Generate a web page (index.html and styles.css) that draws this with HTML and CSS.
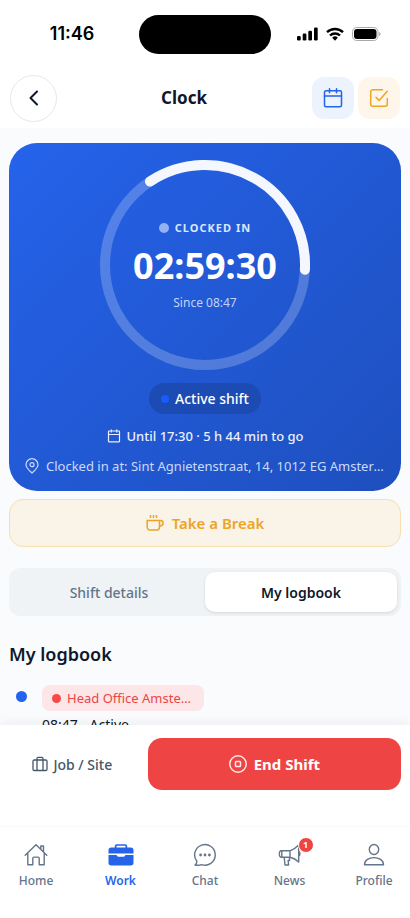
FILE: index.html
```html
<!DOCTYPE html>
<html lang="en">
<head>
<meta charset="utf-8">
<meta name="viewport" content="width=device-width, initial-scale=1">
<title>Clock</title>
<link rel="stylesheet" href="styles.css">
</head>
<body>
<div class="status-bar">
  <time class="status-time">11:46</time>
  <div class="island"></div>
  <div class="status-icons">
    <svg width="21" height="14" viewBox="0 0 21 14"><g fill="#000"><rect x="0" y="9" width="3.700" height="4.500" rx="1.200"/><rect x="5.700" y="6.500" width="3.700" height="7" rx="1.200"/><rect x="11.300" y="3.700" width="3.700" height="9.800" rx="1.200"/><rect x="17" y=".5" width="3.700" height="13" rx="1.200"/></g></svg>
    <svg width="18" height="14" viewBox="0 0 18 14" stroke="#000" stroke-width="2.400"><path d="M1 5.200a11.500 11.500 0 0 1 16 0"/><path d="M4 8.500a7.200 7.200 0 0 1 10 0"/><path d="M6.200 10.700a4 4 0 0 1 5.600 0L9 13.700z" fill="#000" stroke="none"/></svg>
    <svg width="29" height="14" viewBox="0 0 29 14"><rect x=".5" y=".5" width="25.500" height="13" rx="4.200" fill="none" stroke="#aaa"/><rect x="2" y="2" width="22.500" height="10" rx="3" fill="#000"/><path d="M27.300 4.800v4.400c1.600-.7 1.600-3.700 0-4.400z" fill="#999"/></svg>
  </div>
</div>

<header class="header">
  <button class="back" aria-label="Back"><svg width="24" height="24" viewBox="0 0 24 24"><path d="M15 5.500 8.500 12l6.500 6.500"/></svg></button>
  <h1 class="title">Clock</h1>
  <div class="header-actions">
    <button class="square square-blue" aria-label="Calendar"><svg width="20" height="20" viewBox="0 0 20 20"><rect x="1.500" y="2.800" width="17" height="16" rx="1.500"/><path d="M1.500 8h17M6.500.8v4M13.500.8v4"/></svg></button>
    <button class="square square-amber" aria-label="Tasks"><svg width="20" height="20" viewBox="0 0 20 20"><path d="M18.300 10.500v5.800a2 2 0 0 1-2 2H3.700a2 2 0 0 1-2-2V3.700a2 2 0 0 1 2-2h9.800"/><path d="m7 9.200 3.200 3.200 8-9.200"/></svg></button>
  </div>
</header>

<main class="content">
  <section class="card">
    <div class="ring">
      <svg class="ring-art" viewBox="0 0 210 210"><circle class="ring-track" cx="105" cy="105" r="100"/><path class="ring-value" d="M50 21.500A100 100 0 0 1 204.900 109.700"/></svg>
      <div class="ring-text">
        <div class="state"><span class="state-dot"></span>CLOCKED IN</div>
        <div class="timer">02:59:30</div>
        <div class="since">Since 08:47</div>
      </div>
    </div>
    <div class="pill"><span class="pill-dot"></span>Active shift</div>
    <div class="until"><svg width="14" height="14" viewBox="0 0 14 14"><rect x="1.500" y="2" width="11" height="10.800" rx=".5"/><path d="M1.500 5.500h11M4.300.5v3M9.700.5v3"/></svg>Until 17:30 · 5 h 44 min to go</div>
    <div class="place"><svg width="14" height="16" viewBox="0 0 14 16"><path d="M7 15C4.500 12.700 1 9.700 1 6.700a6 6 0 0 1 12 0C13 9.700 9.500 12.700 7 15z"/><circle cx="7" cy="6.700" r="2"/></svg><span class="place-text">Clocked in at: Sint Agnietenstraat, 14, 1012 EG Amsterdam</span></div>
  </section>

  <button class="break"><svg width="18" height="18" viewBox="0 0 18 18"><path d="M1.200 6.500h12.300v6.800a2.700 2.700 0 0 1-2.700 2.700H3.900a2.700 2.700 0 0 1-2.700-2.700zM13.500 6.500h1a2.600 2.600 0 0 1 0 5.200h-1M4.500 1v3M7.500 1v3M10.500 1v3"/></svg>Take a Break</button>

  <div class="tabs" role="tablist">
    <button class="tab" role="tab" aria-selected="false">Shift details</button>
    <button class="tab tab-active" role="tab" aria-selected="true">My logbook</button>
  </div>

  <h2 class="section-title">My logbook</h2>
  <div class="entry">
    <span class="entry-dot"></span>
    <div class="entry-body">
      <div class="tag"><span class="tag-dot"></span><span class="tag-text">Head Office Amsterdam</span></div>
      <div class="entry-time">08:47 - Active</div>
    </div>
  </div>
</main>

<div class="action-bar">
  <button class="job"><svg width="16" height="16" viewBox="0 0 16 16"><rect x="1" y="4" width="14" height="10.500" rx="1.300"/><path d="M5 14.500V2.500A1.200 1.200 0 0 1 6.200 1.300h3.600A1.200 1.200 0 0 1 11 2.500v12"/></svg>Job / Site</button>
  <button class="end"><svg width="18" height="18" viewBox="0 0 18 18"><circle cx="9" cy="9" r="8.200"/><rect x="6.500" y="6.500" width="5" height="5" rx=".8"/></svg>End Shift</button>
</div>

<nav class="nav">
  <a class="nav-item" href="#"><svg width="24" height="24" viewBox="0 0 24 24"><path d="M1.200 12.200 12 1.800l10.800 10.400M3.800 10v11.800h5v-6.500a1.200 1.200 0 0 1 1.200-1.200h4a1.200 1.200 0 0 1 1.200 1.200v6.500h5V10M16.800 6V3h2.700v5.700"/></svg>Home</a>
  <a class="nav-item nav-active" href="#"><svg class="solid" width="26" height="24" viewBox="0 0 26 24"><path d="M6.800 4.500V3.300A2 2 0 0 1 8.800 1.300h8.400a2 2 0 0 1 2 2V4.500h3.600A2.700 2.700 0 0 1 25.500 7.200V10.500H.5V7.200A2.700 2.700 0 0 1 3.200 4.500zM8.500 3.200V4.500h9V3.200a.4.400 0 0 0-.4-.4H8.900a.4.400 0 0 0-.4.400zM.5 11.900H8.200c.9 0 1 1.900 2.200 1.900h5.200c1.200 0 1.300-1.900 2.200-1.900h7.700v7.900a2.700 2.700 0 0 1-2.700 2.700H3.200a2.700 2.700 0 0 1-2.700-2.700z" fill-rule="evenodd"/></svg>Work</a>
  <a class="nav-item" href="#"><svg width="24" height="24" viewBox="0 0 24 24"><path d="M3.800 18.200A10.300 10.300 0 1 1 8.500 21.600C6.800 22.400 4.500 22.300 2 22c1.400-1 2-2.300 1.800-3.800z"/><circle class="dot" cx="7.600" cy="12" r="1.400"/><circle class="dot" cx="12" cy="12" r="1.400"/><circle class="dot" cx="16.400" cy="12" r="1.400"/></svg>Chat</a>
  <a class="nav-item" href="#"><span class="badge-wrap"><svg width="24" height="24" viewBox="0 0 24 24"><path d="M3 7.800h9v6.400H3c-2.200 0-2.200-6.400 0-6.400zM3.800 7.800v6.400M12 7.800c3.500-1.300 6.300-3.300 8.700-5.800v17c-2.400-2.400-5.200-4-8.700-4.800M6.200 14.200l.8 7.800h3.600l-.5-4.500h1.400v-3.300M20.700 8.500c1.600.7 1.600 4 0 4.700"/></svg><span class="badge">1</span></span>News</a>
  <a class="nav-item" href="#"><svg width="24" height="24" viewBox="0 0 24 24"><ellipse cx="12" cy="6.500" rx="4.700" ry="5"/><path d="M2.500 21.700c0-9.500 19-9.500 19 0z"/></svg>Profile</a>
</nav>
</body>
</html>
```
FILE: styles.css
```css
* { box-sizing: border-box; }
body {
  margin: 0;
  height: 100vh;
  display: flex;
  flex-direction: column;
  background: #fff;
  color: #0f172a;
  font-family: "Noto Sans", sans-serif;
  font-size: 14px;
}
button { font: inherit; border: 0; padding: 0; background: none; color: inherit; }
svg { display: block; flex: none; fill: none; }

.status-bar {
  flex: none;
  display: grid;
  grid-template-columns: 1fr 132px 1fr;
  align-items: center;
  height: 68px;
}
.status-time { font: 600 18px/20px Inter, sans-serif; color: #000; text-align: center; padding-left: 5px; }
.island { height: 39px; border-radius: 20px; background: #000; }
.status-icons { display: flex; gap: 8px; padding-left: 26px; }

.header {
  flex: none;
  display: grid;
  grid-template-columns: 1fr auto 1fr;
  align-items: center;
  height: 60px;
  padding: 0 10px;
}
.back {
  display: grid;
  place-items: center;
  width: 47px;
  height: 47px;
  border: 1px solid #e2e8f0;
  border-radius: 50%;
}
.back svg { stroke: #0f172a; stroke-width: 2; stroke-linecap: round; stroke-linejoin: round; }
.title { margin: 0; padding-right: 42px; font-size: 17px; line-height: 24px; font-weight: 700; }
.header-actions { display: flex; justify-content: flex-end; gap: 4px; }
.square { display: grid; place-items: center; width: 42px; height: 42px; border-radius: 12px; }
.square svg { stroke: currentColor; stroke-width: 1.5; stroke-linecap: round; stroke-linejoin: round; }
.square-blue { background: #edf3fd; color: #2563eb; }
.square-amber { background: #fef6ea; color: #f0a41f; }

.content {
  flex: 1;
  min-height: 0;
  overflow: hidden;
  padding: 15px 9px 0;
  background: #f9fbfd;
}
.card {
  display: flex;
  flex-direction: column;
  align-items: center;
  padding: 17px 16px 15px;
  border-radius: 28px;
  background: linear-gradient(135deg, #2563eb, #1e4fbe);
  color: #fff;
}
.ring { display: grid; width: 210px; height: 210px; }
.ring > * { grid-area: 1 / 1; }
.ring-track { stroke: rgba(255, 255, 255, .22); stroke-width: 10; }
.ring-value { stroke: #f4f8fe; stroke-width: 10; stroke-linecap: round; }
.ring-text { display: flex; flex-direction: column; align-items: center; padding-top: 59px; }
.state {
  display: flex;
  align-items: center;
  gap: 6px;
  font-size: 11px;
  line-height: 18px;
  font-weight: 700;
  letter-spacing: 1px;
  color: #dbe7fd;
}
.state-dot { width: 10px; height: 10px; border-radius: 50%; background: #93b1f4; }
.timer { font-size: 36px; line-height: 44px; font-weight: 700; margin-top: 7px; }
.since { font-size: 12px; line-height: 18px; margin-top: 6px; color: #c3d3f8; }
.pill {
  display: flex;
  align-items: center;
  gap: 6px;
  height: 31px;
  margin-top: 13px;
  padding: 0 12px;
  border-radius: 16px;
  background: #1c4bb3;
  font-weight: 500;
}
.pill-dot { width: 8px; height: 8px; border-radius: 50%; background: #155dfc; }
.until, .place { display: flex; align-items: center; max-width: 100%; line-height: 20px; font-size: 13px; }
.until { gap: 6px; margin-top: 12px; font-weight: 500; color: #e9f0fe; }
.place { gap: 7px; margin-top: 10px; color: #cbdafa; }
.until svg, .place svg { stroke: currentColor; stroke-width: 1.2; }
.place-text { overflow: hidden; white-space: nowrap; text-overflow: ellipsis; }

.break {
  display: flex;
  align-items: center;
  justify-content: center;
  gap: 8px;
  width: 100%;
  height: 48px;
  margin-top: 8px;
  border: 1px solid #f8dfb2;
  border-radius: 14px;
  background: #f9f3e8;
  color: #eda426;
  font-size: 15px;
  font-weight: 600;
}
.break svg { stroke: currentColor; stroke-width: 1.5; }

.tabs {
  display: grid;
  grid-template-columns: 1fr 1fr;
  height: 48px;
  margin-top: 21px;
  padding: 4px;
  border-radius: 12px;
  background: #eff3f5;
}
.tab { border-radius: 10px; color: #64748b; font-weight: 500; }
.tab-active { background: #fff; color: #0f172a; font-weight: 600; box-shadow: 0 1px 3px rgba(15, 23, 42, .12); }

.section-title { margin: 25px 0 0; font-size: 18px; line-height: 26px; font-weight: 600; }
.entry { display: flex; gap: 15px; padding-left: 7px; margin-top: 18px; }
.entry-dot { width: 11px; height: 11px; margin-top: 6px; border-radius: 50%; background: #2563eb; }
.entry-body { width: 162px; }
.tag {
  display: flex;
  align-items: center;
  gap: 6px;
  height: 26px;
  padding: 0 10px;
  border-radius: 8px;
  background: #fce6e8;
  color: #ef4444;
  font-size: 13px;
}
.tag-dot { flex: none; width: 9px; height: 9px; border-radius: 50%; background: #f84848; }
.tag-text { overflow: hidden; white-space: nowrap; text-overflow: ellipsis; }
.entry-time { font-size: 14px; line-height: 20px; margin-top: 4px; }

.action-bar {
  flex: none;
  display: flex;
  align-items: flex-start;
  height: 101px;
  padding: 13px 9px 0;
  background: #fff;
  box-shadow: 0 -3px 10px rgba(15, 23, 42, .05);
}
.job, .end { display: flex; align-items: center; justify-content: center; height: 52px; }
.job { flex: 1; gap: 5px; padding-right: 12px; color: #475569; font-weight: 500; }
.job svg { stroke: currentColor; stroke-width: 1.3; }
.end { flex: 2; gap: 7px; border-radius: 14px; background: #ef4444; color: #fff; font-size: 15px; font-weight: 700; }
.end svg { stroke: #ffe9e9; stroke-width: 1.5; }

.nav {
  flex: none;
  display: flex;
  justify-content: space-between;
  height: 92px;
  border-top: 1px solid #f8f9fa;
  padding-top: 16px;
}
.nav-item {
  display: flex;
  flex-direction: column;
  align-items: center;
  gap: 6px;
  width: 72px;
  color: #64748b;
  font-size: 12px;
  line-height: 16px;
  font-weight: 500;
  text-decoration: none;
}
.nav-item svg { stroke: currentColor; stroke-width: 1.4; stroke-linejoin: round; stroke-linecap: round; }
.nav-active { color: #2563eb; font-weight: 600; }
.nav-item .solid, .nav-item .dot { fill: currentColor; stroke: none; }
.badge-wrap { position: relative; }
.badge {
  position: absolute;
  top: -6px;
  right: -12px;
  width: 16px;
  height: 16px;
  border: 1px solid #fff;
  border-radius: 50%;
  background: #ef4444;
  color: #fff;
  font-size: 9px;
  line-height: 14px;
  font-weight: 700;
  text-align: center;
}
```
